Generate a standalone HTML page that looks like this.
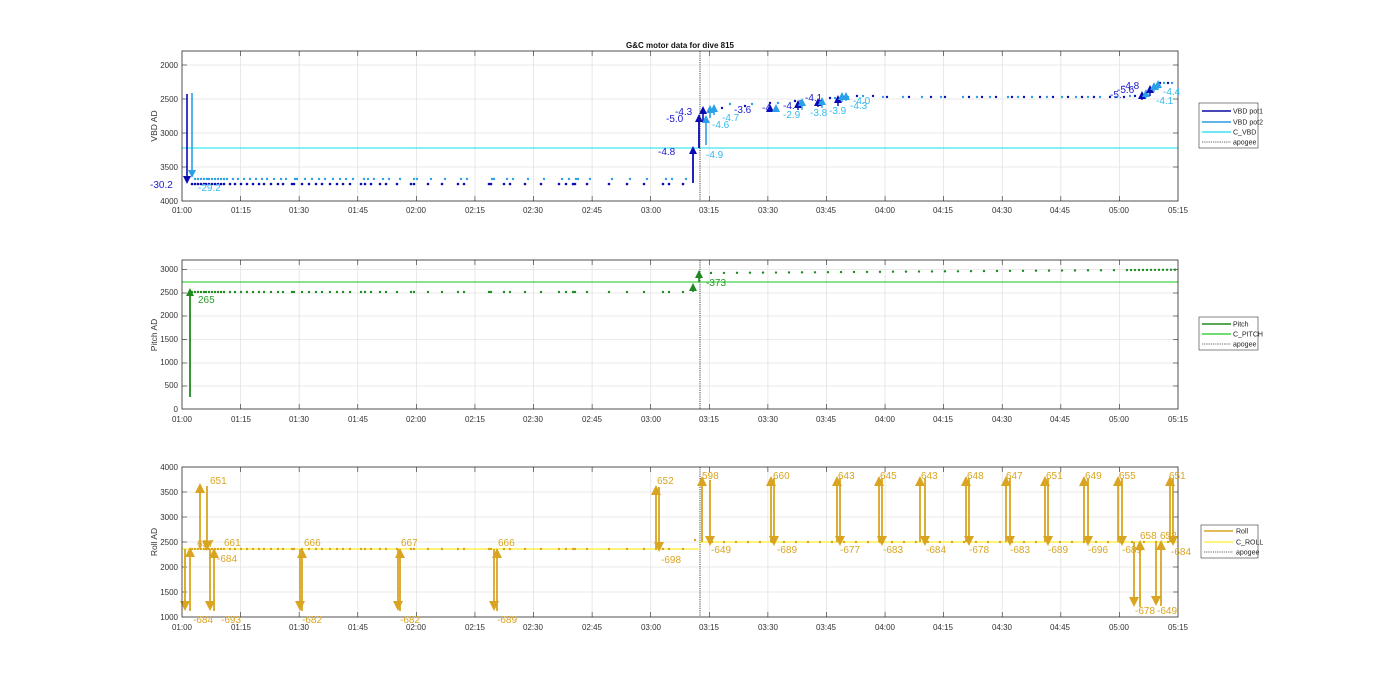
<!DOCTYPE html>
<html><head><meta charset="utf-8"><style>
html,body{margin:0;padding:0;background:#fff;width:1400px;height:693px;overflow:hidden}
svg text{font-family:"Liberation Sans",sans-serif}
.t{font-size:8px;fill:#333}
.yl{font-size:8px;fill:#333}
</style></head><body>
<svg id="s" width="1400" height="693" xmlns="http://www.w3.org/2000/svg">
<rect width="1400" height="693" fill="#fff"/>
<g id="grid"></g>
<g id="data"></g>
<g id="frames" fill="none" stroke="#262626" stroke-width="0.8">
<rect x="182" y="51" width="996" height="150"/>
<rect x="182" y="260" width="996" height="149"/>
<rect x="182" y="467" width="996" height="150"/>
</g>
<text x="680" y="48" font-size="8" font-weight="bold" text-anchor="middle" fill="#111">G&amp;C motor data for dive 815</text>
<g class="yl" text-anchor="end">
<text x="178" y="68">2000</text><text x="178" y="102">2500</text><text x="178" y="136">3000</text><text x="178" y="170">3500</text><text x="178" y="204">4000</text>
<text x="178" y="272">3000</text><text x="178" y="295">2500</text><text x="178" y="318">2000</text><text x="178" y="342">1500</text><text x="178" y="365">1000</text><text x="178" y="388">500</text><text x="178" y="412">0</text>
<text x="178" y="470">4000</text><text x="178" y="495">3500</text><text x="178" y="520">3000</text><text x="178" y="545">2500</text><text x="178" y="570">2000</text><text x="178" y="595">1500</text><text x="178" y="620">1000</text>
</g>
<text transform="translate(157,126) rotate(-90)" font-size="8.5" fill="#333" text-anchor="middle">VBD AD</text>
<text transform="translate(157,335) rotate(-90)" font-size="8.5" fill="#333" text-anchor="middle">Pitch AD</text>
<text transform="translate(157,542) rotate(-90)" font-size="8.5" fill="#333" text-anchor="middle">Roll AD</text>
<g class="t" text-anchor="middle">
<text x="182" y="213">01:00</text><text x="241" y="213">01:15</text><text x="299" y="213">01:30</text><text x="358" y="213">01:45</text><text x="416" y="213">02:00</text><text x="475" y="213">02:15</text><text x="533" y="213">02:30</text><text x="592" y="213">02:45</text><text x="651" y="213">03:00</text><text x="709" y="213">03:15</text><text x="768" y="213">03:30</text><text x="826" y="213">03:45</text><text x="885" y="213">04:00</text><text x="943" y="213">04:15</text><text x="1002" y="213">04:30</text><text x="1060" y="213">04:45</text><text x="1119" y="213">05:00</text><text x="1178" y="213">05:15</text>
<text x="182" y="422">01:00</text><text x="241" y="422">01:15</text><text x="299" y="422">01:30</text><text x="358" y="422">01:45</text><text x="416" y="422">02:00</text><text x="475" y="422">02:15</text><text x="533" y="422">02:30</text><text x="592" y="422">02:45</text><text x="651" y="422">03:00</text><text x="709" y="422">03:15</text><text x="768" y="422">03:30</text><text x="826" y="422">03:45</text><text x="885" y="422">04:00</text><text x="943" y="422">04:15</text><text x="1002" y="422">04:30</text><text x="1060" y="422">04:45</text><text x="1119" y="422">05:00</text><text x="1178" y="422">05:15</text>
<text x="182" y="630">01:00</text><text x="241" y="630">01:15</text><text x="299" y="630">01:30</text><text x="358" y="630">01:45</text><text x="416" y="630">02:00</text><text x="475" y="630">02:15</text><text x="533" y="630">02:30</text><text x="592" y="630">02:45</text><text x="651" y="630">03:00</text><text x="709" y="630">03:15</text><text x="768" y="630">03:30</text><text x="826" y="630">03:45</text><text x="885" y="630">04:00</text><text x="943" y="630">04:15</text><text x="1002" y="630">04:30</text><text x="1060" y="630">04:45</text><text x="1119" y="630">05:00</text><text x="1178" y="630">05:15</text>
</g>
<g font-size="10">
<text x="150" y="188" fill="#1a1ad0">-30.2</text>
<text x="198" y="191" fill="#33bbee">-29.2</text>
<text x="658" y="155" fill="#1a1ad0">-4.8</text>
<text x="666" y="122" fill="#1a1ad0">-5.0</text>
<text x="675" y="115" fill="#1a1ad0">-4.3</text>
<text x="706" y="158" fill="#33bbee">-4.9</text>
<text x="712" y="128" fill="#33bbee">-4.6</text>
<text x="722" y="121" fill="#33bbee">-4.7</text>
<text x="734" y="113" fill="#1a1ad0">-3.6</text>
<text x="762" y="111" fill="#1a1ad0">-4.</text>
<text x="783" y="109" fill="#1a1ad0">-4.</text>
<text x="783" y="118" fill="#33bbee">-2.9</text>
<text x="805" y="101" fill="#1a1ad0">-4.1</text>
<text x="810" y="116" fill="#33bbee">-3.8</text>
<text x="829" y="114" fill="#33bbee">-3.9</text>
<text x="850" y="109" fill="#33bbee">-4.3</text>
<text x="853" y="104" fill="#33bbee">-4.0</text>
<text x="1110" y="98" fill="#1a1ad0">-5.</text>
<text x="1117" y="93" fill="#1a1ad0">-5.6</text>
<text x="1122" y="89" fill="#1a1ad0">-4.8</text>
<text x="1156" y="104" fill="#33bbee">-4.1</text>
<text x="1163" y="95" fill="#33bbee">-4.4</text>
</g>
<g font-size="10" fill="#2a9a2a"><text x="198" y="303">265</text><text x="706" y="286">-373</text></g>
<g font-size="10" fill="#d9a520">
<text x="193" y="623">-684</text><text x="197" y="547">657</text><text x="210" y="484">651</text><text x="217" y="562">-684</text><text x="221" y="623">-693</text><text x="224" y="546">661</text>
<text x="304" y="546">666</text><text x="302" y="623">-682</text>
<text x="401" y="546">667</text><text x="400" y="623">-682</text>
<text x="498" y="546">666</text><text x="497" y="623">-689</text>
<text x="657" y="484">652</text><text x="661" y="563">-698</text>
<text x="702" y="479">598</text><text x="711" y="553">-649</text>
<text x="773" y="479">660</text><text x="777" y="553">-689</text>
<text x="838" y="479">643</text><text x="840" y="553">-677</text>
<text x="880" y="479">645</text><text x="883" y="553">-683</text>
<text x="921" y="479">643</text><text x="926" y="553">-684</text>
<text x="967" y="479">648</text><text x="969" y="553">-678</text>
<text x="1006" y="479">647</text><text x="1010" y="553">-683</text>
<text x="1046" y="479">651</text><text x="1048" y="553">-689</text>
<text x="1085" y="479">649</text><text x="1088" y="553">-696</text>
<text x="1119" y="479">655</text><text x="1122" y="553">-689</text>
<text x="1140" y="539">658</text><text x="1160" y="539">652</text>
<text x="1135" y="614">-678</text><text x="1157" y="614">-649</text>
<text x="1169" y="479">651</text><text x="1171" y="555">-684</text>
</g>
<g font-size="7" fill="#222">
<rect x="1199" y="103" width="59" height="45" fill="#fff" stroke="#333" stroke-width="0.6"/>
<line x1="1202" y1="111" x2="1231" y2="111" stroke="#0a0aa0" stroke-width="1.6"/><text x="1233" y="113.5">VBD pot1</text>
<line x1="1202" y1="122" x2="1231" y2="122" stroke="#2a9be0" stroke-width="1.6"/><text x="1233" y="124.5">VBD pot2</text>
<line x1="1202" y1="132" x2="1231" y2="132" stroke="#3de0f0" stroke-width="1.6"/><text x="1233" y="134.5">C_VBD</text>
<line x1="1202" y1="142" x2="1231" y2="142" stroke="#333" stroke-width="0.8" stroke-dasharray="1.2 1"/><text x="1233" y="144.5">apogee</text>
<rect x="1199" y="317" width="59" height="33" fill="#fff" stroke="#333" stroke-width="0.6"/>
<line x1="1202" y1="324" x2="1231" y2="324" stroke="#1e8a1e" stroke-width="1.6"/><text x="1233" y="326.5">Pitch</text>
<line x1="1202" y1="334" x2="1231" y2="334" stroke="#44d044" stroke-width="1.6"/><text x="1233" y="336.5">C_PITCH</text>
<line x1="1202" y1="344" x2="1231" y2="344" stroke="#333" stroke-width="0.8" stroke-dasharray="1.2 1"/><text x="1233" y="346.5">apogee</text>
<rect x="1201" y="525" width="57" height="33" fill="#fff" stroke="#333" stroke-width="0.6"/>
<line x1="1204" y1="531" x2="1233" y2="531" stroke="#d9a520" stroke-width="1.6"/><text x="1236" y="533.5">Roll</text>
<line x1="1204" y1="542" x2="1233" y2="542" stroke="#fff050" stroke-width="1.6"/><text x="1236" y="544.5">C_ROLL</text>
<line x1="1204" y1="552" x2="1233" y2="552" stroke="#333" stroke-width="0.8" stroke-dasharray="1.2 1"/><text x="1236" y="554.5">apogee</text>
</g>
</svg>
<script>
var NS="http://www.w3.org/2000/svg";
function el(p,t,a){var e=document.createElementNS(NS,t);for(var k in a)e.setAttribute(k,a[k]);document.getElementById(p).appendChild(e);return e;}
var XT=[];for(var i=0;i<=17;i++)XT.push(182+i*996/17);
[[51,201,[65,99,133,167]],[260,409,[269.5,293,316,339.5,363,386]],[467,617,[492,517,542,567,592]]].forEach(function(p){
 XT.forEach(function(x,i){if(i>0&&i<17){el("grid","line",{x1:x,y1:p[0],x2:x,y2:p[1],stroke:"#e2e2e2","stroke-width":0.8});
  el("grid","line",{x1:x,y1:p[0],x2:x,y2:p[0]+5,stroke:"#262626","stroke-width":0.6});el("grid","line",{x1:x,y1:p[1],x2:x,y2:p[1]-5,stroke:"#262626","stroke-width":0.6});}});
 p[2].forEach(function(y){el("grid","line",{x1:182,y1:y,x2:1178,y2:y,stroke:"#e2e2e2","stroke-width":0.8});
  el("grid","line",{x1:182,y1:y,x2:187,y2:y,stroke:"#262626","stroke-width":0.6});el("grid","line",{x1:1178,y1:y,x2:1173,y2:y,stroke:"#262626","stroke-width":0.6});});
});
function dot(x,y,c,r){el("data","circle",{cx:x,cy:y,r:r||1.4,fill:c});}
function arrow(x,y1,y2,c,w,h){h=h||4;var L=h*2;el("data","line",{x1:x,y1:y1,x2:x,y2:y2+(y2<y1?4:-4),stroke:c,"stroke-width":w||1.6});
 var d=y2<y1?1:-1;el("data","polygon",{points:(x-h)+","+(y2+L*d)+" "+(x+h)+","+(y2+L*d)+" "+x+","+y2,fill:c});}
var DB="#0a0ab4",LB="#2aa0e8",CY="#3de6f2",GR="#1e8a1e",RO="#d9a520";
el("data","line",{x1:182,y1:148,x2:1178,y2:148,stroke:CY,"stroke-width":1.3});
var xs=[192,195,198,201,204,206,209,212,215,218,221,224,230,235,241,247,253,259,264,271,278,283,292,294,302,309,316,322,330,337,343,350,361,365,371,380,386,397,411,414,428,442,458,464,489,491,504,510,525,541,559,566,573,575,587,609,627,644,663,669,683];
xs.forEach(function(x,i){dot(x,184,DB,1.3);dot(x+3,179,LB,1.2);});
var post=[[722,108],[730,104],[745,106],[752,104],[770,103],[778,103],[795,101],[800,101],[830,98],[835,98],[842,97],[848,97],[857,96],[863,96],[873,96],[883,97],[887,97],[903,97],[909,97],[922,97],[931,97],[941,97],[945,97],[963,97],[969,97],[977,97],[982,97],[990,97],[996,97],[1008,97],[1012,97],[1018,97],[1024,97],[1032,97],[1040,97],[1047,97],[1053,97],[1062,97],[1068,97],[1076,97],[1082,97],[1088,97],[1094,97],[1100,97],[1110,97],[1116,97],[1124,97],[1130,96],[1135,96],[1142,96],[1160,83],[1164,83],[1168,83],[1172,83]];
post.forEach(function(p,i){dot(p[0],p[1],i%2?LB:DB,1.2);});
arrow(187,94,184,DB);arrow(192,93,178,LB);
arrow(693,183,146,DB,1.8);arrow(699,148,114,DB,1.8);arrow(703,122,106,DB);
arrow(706,145,115,LB);arrow(710,118,105,LB);arrow(714,115,104,LB);
[[770,111,104,DB],[776,112,104,LB],[798,110,100,DB],[802,110,98,LB],[818,107,98,DB],[822,108,97,LB],[838,106,95,DB],[842,102,92,LB],[846,101,92,LB],[1142,100,91,DB],[1146,98,89,LB],[1150,96,85,DB],[1154,92,82,LB],[1158,90,80,LB]].forEach(function(a){arrow(a[0],a[1],a[2],a[3],1.4);});
[[51,201],[260,409],[467,617]].forEach(function(p){el("data","line",{x1:700,y1:p[0],x2:700,y2:p[1],stroke:"#333","stroke-width":0.9,"stroke-dasharray":"1.2 1"});});
el("data","line",{x1:182,y1:282,x2:1178,y2:282,stroke:"#44d044","stroke-width":1.3});
xs.forEach(function(x){dot(x,292,GR,1.2);});
for(var x=711;x<1178;x+=(x>1120?4:13))dot(x,273-(x-711)*0.007,GR,1.2);
arrow(190,397,288,GR,1.8);arrow(693,292,283,GR,1.6);arrow(699,282,270,GR,1.6);
el("data","line",{x1:182,y1:549,x2:700,y2:549,stroke:"#fff050","stroke-width":1.4});
el("data","line",{x1:700,y1:542,x2:1178,y2:542,stroke:"#fff050","stroke-width":1.4});
xs.forEach(function(x){if(x<690)dot(x,549,RO,1.2);});
for(var x=712;x<1178;x+=12)dot(x,542,RO,1.2);
dot(695,540,RO,1.2);
function ra(x,a,b){arrow(x,a,b,RO,1.8,5);}
ra(185,549,611);ra(190,611,547);ra(200,549,483);ra(207,486,551);ra(210,549,611);ra(214,611,548);
[[300,302],[398,400],[494,497]].forEach(function(p){ra(p[0],549,611);ra(p[1],611,548);});
ra(656,550,485);ra(659,487,552);
ra(702,542,476);ra(710,480,546);
[[771,774],[837,840],[879,882],[920,925],[966,969],[1006,1010],[1045,1048],[1084,1088],[1118,1122],[1170,1173]].forEach(function(p){ra(p[0],542,476);ra(p[1],478,546);});
ra(1134,542,607);ra(1140,607,540);ra(1156,542,606);ra(1161,606,540);
</script>
</body></html>
